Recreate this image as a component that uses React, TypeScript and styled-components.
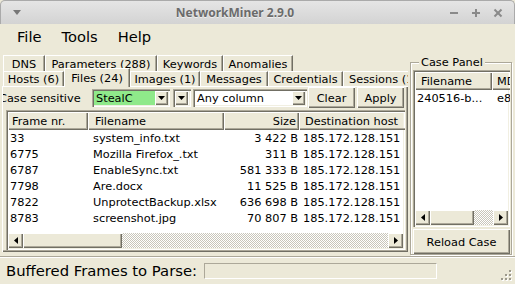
import React from 'react';
import styled, { createGlobalStyle, css } from 'styled-components';

const C = {
  face: '#ece9d8',
  light: '#f1efe2',
  dark: '#aca899',
  darker: '#716f64',
};

const raised = css`
  box-shadow: inset 1px 1px #fff, inset -1px -1px ${C.darker}, inset -2px -2px ${C.dark};
`;

const sunken = css`
  box-shadow: inset 1px 1px ${C.dark}, inset 2px 2px ${C.darker}, inset -1px -1px #fff, inset -2px -2px ${C.light};
`;

const checker = css`
  background: repeating-conic-gradient(#c9c6ba 0% 25%, #fff 0% 50%) 0 0 / 2px 2px;
`;

const GlobalStyle = createGlobalStyle`
  html, body { margin: 0; padding: 0; background: ${C.face}; }
  * { box-sizing: border-box; }
`;

const Window = styled.div`
  width: 515px;
  height: 284px;
  display: flex;
  flex-direction: column;
  overflow: hidden;
  background: ${C.face};
  font-family: 'DejaVu Sans', sans-serif;
  font-size: 11.33px;
  color: #000;
`;

const TitleBar = styled.div`
  height: 24px;
  flex: none;
  display: flex;
  align-items: center;
  background: linear-gradient(#e5e5e5, #d3d3d3);
  border: 1px solid #aaa;
  border-bottom: 0;
  border-radius: 5px 5px 0 0;
`;

const TitleMenu = styled.div`
  width: 30px;
  display: flex;
  justify-content: center;
  padding-left: 1px;
`;

const TitleText = styled.div`
  flex: 1;
  text-align: center;
  font-family: 'Noto Sans', sans-serif;
  font-weight: 700;
  font-size: 12px;
  color: #6b6b6b;
  text-shadow: 0 1px rgba(255, 255, 255, 0.6);
`;

const TitleControls = styled.div`
  width: 75px;
  display: flex;
  padding-left: 4px;
`;

const TitleButton = styled.div`
  width: 22px;
  height: 22px;
  display: flex;
  align-items: center;
  justify-content: center;
`;

const MenuBar = styled.div`
  height: 26px;
  flex: none;
  display: flex;
  align-items: center;
  padding-left: 7px;
  font-size: 14.67px;
`;

const MenuItem = styled.div`
  padding: 0 10px 2px;
`;

const Main = styled.div`
  flex: 1;
  min-height: 0;
  display: flex;
`;

const LeftPane = styled.div`
  width: 408px;
  padding-left: 2px;
  display: flex;
  flex-direction: column;
  overflow: hidden;
`;

const TabStrip = styled.div`
  padding-top: 5px;
  white-space: nowrap;
`;

const TabRow = styled.div<{ $h: number }>`
  height: ${p => p.$h}px;
  display: flex;
  padding-left: 1px;
`;

const Tab = styled.div<{ $w: number; $active?: boolean }>`
  flex: none;
  width: ${p => p.$w}px;
  display: flex;
  justify-content: center;
  align-items: ${p => (p.$active ? 'flex-start' : 'center')};
  border-left: 1px solid #fff;
  border-top: 1px solid #fff;
  border-right: 1px solid ${C.darker};
  box-shadow: inset -1px 0 ${C.dark};
  background: ${C.face};
  overflow: hidden;
  ${p =>
    p.$active &&
    css`
      position: relative;
      z-index: 1;
      height: 19px;
      margin-top: -3px;
      padding-top: 2px;
    `}
`;

const TabPage = styled.div`
  height: 166px;
  display: flex;
  flex-direction: column;
  padding: 1px 2px 0 1px;
  ${raised};
`;

const FilterRow = styled.div`
  height: 21px;
  flex: none;
  display: flex;
  align-items: center;
`;

const FieldLabel = styled.div`
  width: 89px;
  overflow: hidden;
  white-space: nowrap;
  text-indent: -4px;
`;

const Combo = styled.div<{ $w: number; $bg?: string; $ml?: number }>`
  width: ${p => p.$w}px;
  height: 18px;
  margin-left: ${p => p.$ml ?? 0}px;
  display: flex;
  padding: 2px;
  background: ${p => p.$bg ?? '#fff'};
  ${sunken};
`;

const ComboText = styled.div`
  flex: 1;
  padding-left: 2px;
  line-height: 14px;
  white-space: nowrap;
  overflow: hidden;
`;

const ComboButton = styled.div`
  width: 13px;
  flex: none;
  display: flex;
  align-items: center;
  justify-content: center;
  background: ${C.face};
  ${raised};
`;

const PushButton = styled.div<{ $w: number; $h?: number; $ml?: number; $mt?: number }>`
  width: ${p => p.$w}px;
  height: ${p => p.$h ?? 21}px;
  margin-left: ${p => p.$ml ?? 0}px;
  margin-top: ${p => p.$mt ?? 0}px;
  flex: none;
  display: flex;
  align-items: center;
  justify-content: center;
  background: ${C.face};
  ${raised};
`;

const ListView = styled.div<{ $w: number; $h: number }>`
  width: ${p => p.$w}px;
  height: ${p => p.$h}px;
  flex: none;
  display: flex;
  flex-direction: column;
  padding: 2px;
  background: #fff;
  overflow: hidden;
  ${sunken};
`;

const FilesList = styled(ListView)`
  margin: 2px 0 0 3px;
`;

const CaseList = styled(ListView)`
  margin-top: 1px;
`;

const ListHeader = styled.div`
  height: 18px;
  flex: none;
  display: flex;
  background: ${C.face};
`;

const HeaderCell = styled.div<{ $w: number; $align: string; $pad: number }>`
  width: ${p => p.$w}px;
  flex: none;
  display: flex;
  align-items: center;
  justify-content: ${p => (p.$align === 'right' ? 'flex-end' : 'flex-start')};
  padding: 0 ${p => p.$pad}px 1px;
  white-space: nowrap;
  overflow: hidden;
  ${raised};
`;

const ListBody = styled.div`
  flex: 1;
  min-height: 0;
`;

const ListRow = styled.div`
  height: 16px;
  display: flex;
  align-items: center;
`;

const Cell = styled.div<{ $w: number; $align: string; $pad: number }>`
  width: ${p => p.$w}px;
  flex: none;
  text-align: ${p => p.$align};
  padding: 0 ${p => p.$pad}px;
  white-space: nowrap;
  overflow: hidden;
`;

const HScroll = styled.div`
  height: 15px;
  flex: none;
  display: flex;
`;

const ScrollButton = styled.div`
  width: 15px;
  flex: none;
  display: flex;
  align-items: center;
  justify-content: center;
  background: ${C.face};
  ${raised};
`;

const Thumb = styled.div<{ $w: number }>`
  width: ${p => p.$w}px;
  flex: none;
  background: ${C.face};
  ${raised};
`;

const Track = styled.div`
  flex: 1;
  ${checker};
`;

const CaseGroup = styled.div`
  width: 102px;
  margin: 12px 0 1px 2px;
  display: flex;
  flex-direction: column;
  padding: 0 1px 0 2px;
  border: 1px solid ${C.dark};
  box-shadow: inset 1px 1px #fff, 1px 1px #fff;
`;

const GroupLegend = styled.div`
  width: fit-content;
  height: 14px;
  line-height: 14px;
  margin: -8px 0 0 6px;
  padding: 0 2px;
  background: ${C.face};
  position: relative;
`;

const StatusBar = styled.div`
  height: 28px;
  flex: none;
  display: flex;
  align-items: center;
  padding-left: 6px;
  border-top: 1px solid ${C.dark};
  box-shadow: inset 0 1px #fff;
  font-size: 14.8px;
`;

const StatusField = styled.div`
  width: 233px;
  height: 16px;
  margin-left: 7px;
  border: 1px solid;
  border-color: ${C.dark} #fff #fff ${C.dark};
`;

const Grip = styled.svg`
  margin: auto 3px 2px auto;
  align-self: flex-end;
`;

type Dir = 'down' | 'left' | 'right';

const Arrow = ({ dir }: { dir: Dir }) => {
  const pts = dir === 'down' ? '0,0 7,0 3.5,4' : dir === 'left' ? '4,0 4,7 0,3.5' : '0,0 0,7 4,3.5';
  const w = dir === 'down' ? 7 : 4;
  const h = dir === 'down' ? 4 : 7;
  return (
    <svg width={w} height={h} viewBox={`0 0 ${w} ${h}`}>
      <polygon points={pts} fill="#000" />
    </svg>
  );
};

const WinIcon = ({ kind }: { kind: 'min' | 'max' | 'close' }) => (
  <svg width="10" height="10" viewBox="0 0 10 10" stroke="#8a8a8a" strokeWidth="2" fill="none">
    {kind === 'min' && <line x1="1" y1="5" x2="9" y2="5" />}
    {kind === 'max' && (
      <>
        <line x1="1" y1="5" x2="9" y2="5" />
        <line x1="5" y1="1" x2="5" y2="9" />
      </>
    )}
    {kind === 'close' && (
      <>
        <line x1="1.5" y1="1.5" x2="8.5" y2="8.5" />
        <line x1="8.5" y1="1.5" x2="1.5" y2="8.5" />
      </>
    )}
  </svg>
);

const Scroll = ({ thumb }: { thumb: number }) => (
  <HScroll>
    <ScrollButton>
      <Arrow dir="left" />
    </ScrollButton>
    <Thumb $w={thumb} />
    <Track />
    <ScrollButton>
      <Arrow dir="right" />
    </ScrollButton>
  </HScroll>
);

const topTabs = [
  { label: 'DNS', w: 42 },
  { label: 'Parameters (288)', w: 112 },
  { label: 'Keywords', w: 66 },
  { label: 'Anomalies', w: 70 },
];

const bottomTabs = [
  { label: 'Hosts (6)', w: 61 },
  { label: 'Files (24)', w: 66, active: true },
  { label: 'Images (1)', w: 70 },
  { label: 'Messages', w: 68 },
  { label: 'Credentials', w: 75 },
  { label: 'Sessions (12)', w: 88 },
];

const columns = [
  { title: 'Frame nr.', w: 80, align: 'left', hp: 4, cp: 2 },
  { title: 'Filename', w: 136, align: 'left', hp: 7, cp: 5 },
  { title: 'Size', w: 75, align: 'right', hp: 3, cp: 1 },
  { title: 'Destination host', w: 110, align: 'left', hp: 6, cp: 4 },
];

const files = [
  ['33', 'system_info.txt', '3 422 B', '185.172.128.151'],
  ['6775', 'Mozilla Firefox_.txt', '311 B', '185.172.128.151'],
  ['6787', 'EnableSync.txt', '581 333 B', '185.172.128.151'],
  ['7798', 'Are.docx', '11 525 B', '185.172.128.151'],
  ['7822', 'UnprotectBackup.xlsx', '636 698 B', '185.172.128.151'],
  ['8783', 'screenshot.jpg', '70 807 B', '185.172.128.151'],
];

const caseColumns = [
  { title: 'Filename', w: 77, hp: 6, cp: 2 },
  { title: 'MD5', w: 40, hp: 5, cp: 5 },
];

export default function App() {
  return (
    <>
      <GlobalStyle />
      <Window>
        <TitleBar>
          <TitleMenu>
            <svg width="8" height="5" viewBox="0 0 8 5">
              <polygon points="0,0 8,0 4,5" fill="#777" />
            </svg>
          </TitleMenu>
          <TitleText>NetworkMiner 2.9.0</TitleText>
          <TitleControls>
            <TitleButton>
              <WinIcon kind="min" />
            </TitleButton>
            <TitleButton>
              <WinIcon kind="max" />
            </TitleButton>
            <TitleButton>
              <WinIcon kind="close" />
            </TitleButton>
          </TitleControls>
        </TitleBar>

        <MenuBar>
          <MenuItem>File</MenuItem>
          <MenuItem>Tools</MenuItem>
          <MenuItem>Help</MenuItem>
        </MenuBar>

        <Main>
          <LeftPane>
            <TabStrip>
              <TabRow $h={16}>
                {topTabs.map(t => (
                  <Tab key={t.label} $w={t.w}>
                    {t.label}
                  </Tab>
                ))}
              </TabRow>
              <TabRow $h={15}>
                {bottomTabs.map(t => (
                  <Tab key={t.label} $w={t.w} $active={t.active}>
                    {t.label}
                  </Tab>
                ))}
              </TabRow>
            </TabStrip>

            <TabPage>
              <FilterRow>
                <FieldLabel>Case sensitive</FieldLabel>
                <Combo $w={78} $bg="#8fe98a">
                  <ComboText>StealC</ComboText>
                  <ComboButton>
                    <Arrow dir="down" />
                  </ComboButton>
                </Combo>
                <Combo $w={18} $ml={3}>
                  <ComboButton>
                    <Arrow dir="down" />
                  </ComboButton>
                </Combo>
                <Combo $w={114} $ml={2}>
                  <ComboText>Any column</ComboText>
                  <ComboButton>
                    <Arrow dir="down" />
                  </ComboButton>
                </Combo>
                <PushButton $w={47} $ml={1}>
                  Clear
                </PushButton>
                <PushButton $w={47} $ml={2}>
                  Apply
                </PushButton>
              </FilterRow>

              <FilesList $w={399} $h={140}>
                <ListHeader>
                  {columns.map(c => (
                    <HeaderCell key={c.title} $w={c.w} $align={c.align} $pad={c.hp}>
                      {c.title}
                    </HeaderCell>
                  ))}
                </ListHeader>
                <ListBody>
                  {files.map(r => (
                    <ListRow key={r[0]}>
                      {r.map((v, i) => (
                        <Cell key={i} $w={columns[i].w} $align={columns[i].align} $pad={columns[i].cp}>
                          {v}
                        </Cell>
                      ))}
                    </ListRow>
                  ))}
                </ListBody>
                <Scroll thumb={99} />
              </FilesList>
            </TabPage>
          </LeftPane>

          <CaseGroup>
            <GroupLegend>Case Panel</GroupLegend>
            <CaseList $w={97} $h={157}>
              <ListHeader>
                {caseColumns.map(c => (
                  <HeaderCell key={c.title} $w={c.w} $align="left" $pad={c.hp}>
                    {c.title}
                  </HeaderCell>
                ))}
              </ListHeader>
              <ListBody>
                <ListRow>
                  <Cell $w={caseColumns[0].w} $align="left" $pad={caseColumns[0].cp}>
                    240516-b...
                  </Cell>
                  <Cell $w={caseColumns[1].w} $align="left" $pad={caseColumns[1].cp}>
                    e8
                  </Cell>
                </ListRow>
              </ListBody>
              <Scroll thumb={44} />
            </CaseList>
            <PushButton $w={97} $h={25} $mt={2}>
              Reload Case
            </PushButton>
          </CaseGroup>
        </Main>

        <StatusBar>
          Buffered Frames to Parse:
          <StatusField />
          <Grip width="12" height="12" viewBox="0 0 12 12">
            {[
              [9, 0],
              [5, 4],
              [9, 4],
              [1, 8],
              [5, 8],
              [9, 8],
            ].map(([x, y]) => (
              <g key={`${x}-${y}`}>
                <rect x={x + 1} y={y + 1} width="2" height="2" fill="#fff" />
                <rect x={x} y={y} width="2" height="2" fill="#9d9a8c" />
              </g>
            ))}
          </Grip>
        </StatusBar>
      </Window>
    </>
  );
}
